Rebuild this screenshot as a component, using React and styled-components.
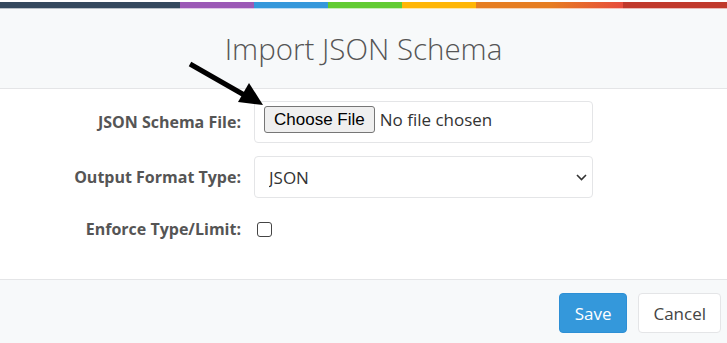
import React from "react";
import styled, { createGlobalStyle } from "styled-components";

const GlobalStyle = createGlobalStyle`
  html, body { margin: 0; padding: 0; background: #ffffff; }
  body { font-family: "Open Sans", "Liberation Sans", sans-serif; color: #555; }
  * { box-sizing: border-box; }
`;

const Modal = styled.div`
  position: relative;
  width: 727px;
  height: 343px;
  overflow: hidden;
  display: flex;
  flex-direction: column;
  background: #fff;
  padding-top: 2px;
`;

const stops = `#34495e 0px, #34495e 180px, #9b59b6 180px, #9b59b6 254px, #3498db 254px, #3498db 328px,
  #62cb31 328px, #62cb31 402px, #ffb606 402px, #ffb606 476px, #e67e22 476px, #e67e22 550px,
  #e74c3c 623px, #c0392b 623px, #c0392b 100%`;

const ColorLine = styled.div`
  height: 6px;
  background-image: linear-gradient(to right, ${stops});
`;

const ColorEdge = styled.div`
  height: 1px;
  background-image: linear-gradient(to right, ${stops});
  opacity: 0.35;
`;

const Header = styled.div`
  height: 80px;
  background: #f7f9fa;
  border-bottom: 1px solid #e4e5e7;
  display: flex;
  align-items: center;
  justify-content: center;
  padding-top: 1px;
`;

const Title = styled.h4`
  margin: 0;
  font-family: "Open Sans", sans-serif;
  font-size: 29.5px;
  font-weight: 300;
  color: #555;
  line-height: 1.1;
`;

const Body = styled.div`
  flex: 1;
  padding-top: 12px;
  display: grid;
  grid-template-columns: 241px 339px;
  grid-auto-rows: min-content;
  column-gap: 13px;
  row-gap: 13px;
  align-content: start;
`;

const Label = styled.label`
  height: ${(p) => p.$h || 42}px;
  display: flex;
  align-items: center;
  justify-content: flex-end;
  font-size: 16px;
  font-weight: 700;
  color: #555;
  white-space: nowrap;
`;

const Field = styled.div`
  height: ${(p) => p.$h || 42}px;
  display: flex;
  align-items: center;
`;

const FileBox = styled.div`
  width: 100%;
  height: 42px;
  border: 1px solid #e4e5e7;
  border-radius: 4px;
  padding: 4px 9px;
  display: flex;
  align-items: flex-start;
`;

const ChooseButton = styled.button`
  height: 27px;
  padding: 0 9px;
  background: #efefef;
  border: 1px solid #767676;
  border-radius: 3px;
  font-family: "Liberation Sans", Arial, sans-serif;
  font-size: 17px;
  color: #000;
  line-height: 1;
`;

const FileName = styled.span`
  margin-left: 5px;
  font-size: 17px;
  color: #333;
  line-height: 27px;
`;

const SelectBox = styled.div`
  width: 100%;
  height: 42px;
  border: 1px solid #e4e5e7;
  border-radius: 4px;
  padding: 0 5px 0 14px;
  display: flex;
  align-items: center;
`;

const Select = styled.select`
  flex: 1;
  appearance: none;
  border: none;
  outline: none;
  background: transparent;
  padding: 0;
  font-family: "Open Sans", sans-serif;
  font-size: 17px;
  color: #333;
`;

const Checkbox = styled.input.attrs({ type: "checkbox" })`
  appearance: none;
  margin: 0 0 0 3px;
  width: 15px;
  height: 15px;
  border: 1.5px solid #444;
  border-radius: 3px;
  background: #fff;
`;

const Footer = styled.div`
  height: 64px;
  background: #f7f9fa;
  border-top: 1px solid #e4e5e7;
  display: flex;
  justify-content: flex-end;
  align-items: flex-start;
  gap: 11px;
  padding: 13px 6px 0 0;
`;

const Button = styled.button`
  height: 40px;
  padding: 0 ${(p) => (p.$primary ? 15 : 14)}px;
  border-radius: 4px;
  font-family: "Open Sans", sans-serif;
  font-size: 17px;
  border: 1px solid ${(p) => (p.$primary ? "#2d8fd5" : "#e4e5e7")};
  background: ${(p) => (p.$primary ? "#3498db" : "#ffffff")};
  color: ${(p) => (p.$primary ? "#ffffff" : "#444")};
`;

const ArrowSvg = styled.svg`
  position: absolute;
  left: 0;
  top: 0;
  pointer-events: none;
`;

function Arrow() {
  return (
    <ArrowSvg width="727" height="343" viewBox="0 0 727 343">
      <line x1="190" y1="64" x2="246" y2="96" stroke="#000" strokeWidth="5" strokeLinecap="butt" />
      <polygon points="263,105 238,102 249,83" fill="#000" />
    </ArrowSvg>
  );
}

export default function App() {
  return (
    <>
      <GlobalStyle />
      <Modal>
        <ColorLine />
        <ColorEdge />
        <Header>
          <Title>Import JSON Schema</Title>
        </Header>
        <Body>
          <Label>JSON Schema File:</Label>
          <Field>
            <FileBox>
              <ChooseButton type="button">Choose File</ChooseButton>
              <FileName>No file chosen</FileName>
            </FileBox>
          </Field>

          <Label>Output Format Type:</Label>
          <Field>
            <SelectBox>
              <Select defaultValue="JSON">
                <option>JSON</option>
              </Select>
              <svg width="11" height="7" viewBox="0 0 11 7">
                <path d="M1 1 L5.5 5.5 L10 1" fill="none" stroke="#333" strokeWidth="1.6" />
              </svg>
            </SelectBox>
          </Field>

          <Label $h={36}>Enforce Type/Limit:</Label>
          <Field $h={36}>
            <Checkbox />
          </Field>
        </Body>
        <Footer>
          <Button $primary type="button">Save</Button>
          <Button type="button">Cancel</Button>
        </Footer>
        <Arrow />
      </Modal>
    </>
  );
}
